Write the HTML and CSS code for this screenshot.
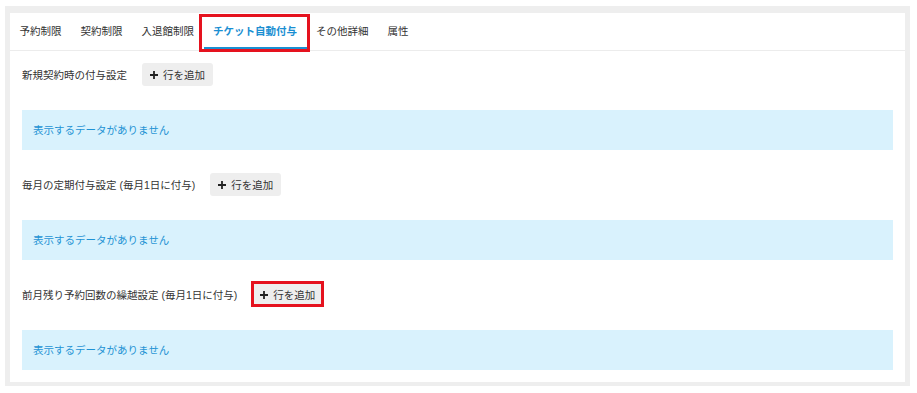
FILE: index.html
```html
<!DOCTYPE html>
<html lang="ja">
<head>
    <meta charset="UTF-8">
    <meta name="viewport" content="width=device-width, initial-scale=1.0">
    <title>チケット自動付与</title>
    <link rel="stylesheet" href="styles.css">
</head>
<body>
    <div class="frame">
        <div class="panel">
            <ul class="tabs">
                <li class="tab">予約制限</li>
                <li class="tab">契約制限</li>
                <li class="tab">入退館制限</li>
                <li class="tab active marked">チケット自動付与</li>
                <li class="tab">その他詳細</li>
                <li class="tab">属性</li>
            </ul>

            <div class="tab-body">
                <section class="grant">
                    <div class="grant-head">
                        <span class="grant-title">新規契約時の付与設定</span>
                        <button class="add-row">
                            <svg width="8" height="8" viewBox="0 0 8 8"><path d="M4 0V8M0 4H8" stroke="#222" stroke-width="1.8"/></svg>
                            行を追加
                        </button>
                    </div>
                    <div class="empty">表示するデータがありません</div>
                </section>

                <section class="grant">
                    <div class="grant-head">
                        <span class="grant-title">毎月の定期付与設定 (毎月1日に付与)</span>
                        <button class="add-row">
                            <svg width="8" height="8" viewBox="0 0 8 8"><path d="M4 0V8M0 4H8" stroke="#222" stroke-width="1.8"/></svg>
                            行を追加
                        </button>
                    </div>
                    <div class="empty">表示するデータがありません</div>
                </section>

                <section class="grant">
                    <div class="grant-head">
                        <span class="grant-title">前月残り予約回数の繰越設定 (毎月1日に付与)</span>
                        <button class="add-row marked">
                            <svg width="8" height="8" viewBox="0 0 8 8"><path d="M4 0V8M0 4H8" stroke="#222" stroke-width="1.8"/></svg>
                            行を追加
                        </button>
                    </div>
                    <div class="empty">表示するデータがありません</div>
                </section>
            </div>
        </div>
    </div>
</body>
</html>
```

FILE: styles.css
```css
body {
    margin: 0;
    background: #fff;
    font-family: "Liberation Sans", "Noto Sans CJK JP", sans-serif;
    font-size: 10.5px;
    color: #333;
}
.frame {
    margin: 6px 7px 0 5px;
    padding: 7px 5px 4px 5px;
    background: #eeeeee;
}
.panel {
    background: #fff;
}
.tabs {
    display: flex;
    margin: 0;
    padding: 0;
    list-style: none;
    border-bottom: 1px solid #ececec;
}
.tab {
    position: relative;
    height: 37px;
    line-height: 36px;
    padding: 0 9.5px;
    box-sizing: border-box;
    border-bottom: 3px solid transparent;
    white-space: nowrap;
}
.tab.active {
    color: #1b8fd2;
    font-weight: bold;
    border-bottom-color: #1b8fd2;
    line-height: 37px;
}
.tab.marked::after {
    content: "";
    position: absolute;
    left: -5px;
    right: -3px;
    top: 1px;
    bottom: -5px;
    border: 3px solid #e5121e;
}
.tab-body {
    padding: 12px;
}
.grant + .grant {
    margin-top: 23px;
}
.grant-head {
    display: flex;
    align-items: center;
    gap: 15px;
    margin-bottom: 24px;
}
.add-row {
    position: relative;
    display: flex;
    align-items: center;
    gap: 5px;
    height: 23px;
    padding: 0 8px;
    border: none;
    border-radius: 3px;
    background: #eeeeee;
    font-family: inherit;
    font-size: 10.5px;
    color: #333;
    cursor: pointer;
}
.add-row.marked::after {
    content: "";
    position: absolute;
    left: -1px;
    right: -1px;
    top: -2px;
    bottom: -1px;
    border: 3px solid #e5121e;
}
.empty {
    height: 40px;
    line-height: 40px;
    padding: 0 11px;
    background: #d9f2fd;
    color: #1f92d4;
}
```
